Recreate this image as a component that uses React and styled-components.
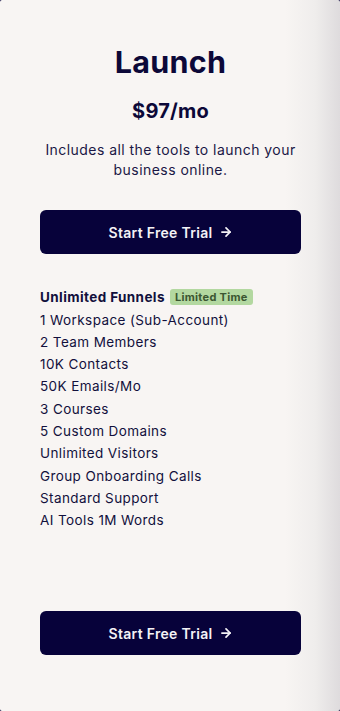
import styled, { createGlobalStyle } from 'styled-components';
import { ArrowRight } from 'lucide-react';

const GlobalStyle = createGlobalStyle`
    html, body {
        margin: 0;
        padding: 0;
        background: #07023a;
    }

    * {
        box-sizing: border-box;
    }
`;

const Card = styled.section`
    height: 100vh;
    display: flex;
    flex-direction: column;
    padding: 44px 39px 56px 40px;
    border-radius: 2px;
    background: linear-gradient(to right, #f8f5f3 0, #f8f5f3 285px, #efedec 315px, #dedbdd 340px);
    color: #0c0838;
    font-family: Inter, "Noto Sans", sans-serif;
`;

const Title = styled.h1`
    margin: 0;
    text-align: center;
    font-size: 30.5px;
    line-height: 36px;
    font-weight: 700;
    letter-spacing: 0.3px;
`;

const Price = styled.div`
    margin-top: 19px;
    text-align: center;
    font-size: 20px;
    line-height: 24px;
    font-weight: 700;
    letter-spacing: 0.2px;
`;

const Blurb = styled.p`
    margin: 17px 0 0;
    text-align: center;
    font-size: 14px;
    line-height: 20px;
    letter-spacing: 0.45px;
    color: #1a1745;
`;

const Button = styled.a`
    display: flex;
    flex-shrink: 0;
    align-items: center;
    justify-content: center;
    gap: 6px;
    height: 44px;
    margin-top: ${(p) => (p.$bottom ? 'auto' : '30px')};
    border-radius: 6px;
    background: #07023a;
    color: #f4f2f6;
    font-size: 14px;
    font-weight: 600;
    letter-spacing: 0.3px;
    text-decoration: none;
    cursor: pointer;
`;

const Features = styled.ul`
    list-style: none;
    margin: 31px 0 40px;
    padding: 0;
`;

const Feature = styled.li`
    display: flex;
    align-items: center;
    gap: 5px;
    min-height: ${(p) => (p.$strong ? '23.5px' : '22.3px')};
    font-size: 13.5px;
    line-height: 22.3px;
    letter-spacing: 0.4px;
    font-weight: ${(p) => (p.$strong ? 700 : 400)};
    color: #12103c;
`;

const Badge = styled.span`
    display: inline-block;
    padding: 0 5px;
    border-radius: 3px;
    background: #b3d8a0;
    color: #3b5631;
    font-size: 11px;
    line-height: 16px;
    font-weight: 700;
    letter-spacing: 0.3px;
`;

const features = [
    '1 Workspace (Sub-Account)',
    '2 Team Members',
    '10K Contacts',
    '50K Emails/Mo',
    '3 Courses',
    '5 Custom Domains',
    'Unlimited Visitors',
    'Group Onboarding Calls',
    'Standard Support',
    'AI Tools 1M Words',
];

const TrialButton = ({bottom}) => (
    <Button $bottom={bottom}>
        Start Free Trial
        <ArrowRight size={14} strokeWidth={3} />
    </Button>
);

const App = () => (
    <>
        <GlobalStyle />
        <Card>
            <Title>Launch</Title>
            <Price>$97/mo</Price>
            <Blurb>Includes all the tools to launch your business online.</Blurb>
            <TrialButton />
            <Features>
                <Feature $strong>
                    Unlimited Funnels
                    <Badge>Limited Time</Badge>
                </Feature>
                {features.map((f) => (
                    <Feature key={f}>{f}</Feature>
                ))}
            </Features>
            <TrialButton bottom />
        </Card>
    </>
);

export default App;
